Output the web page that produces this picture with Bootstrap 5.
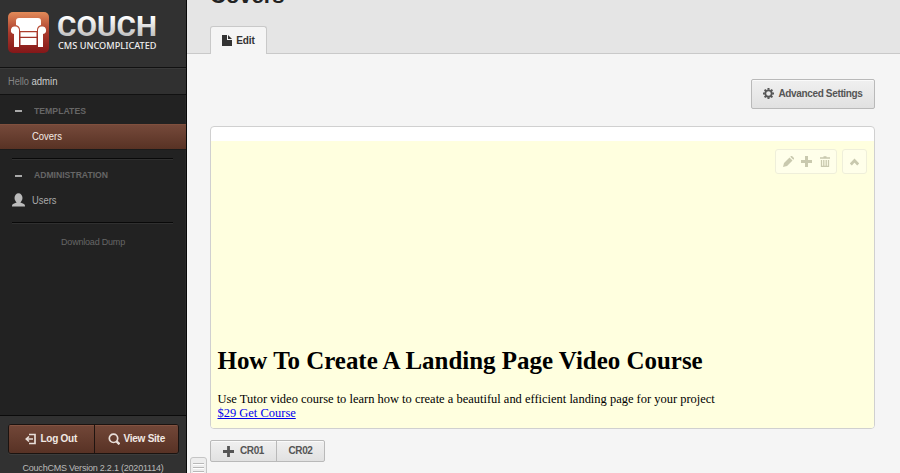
<!DOCTYPE html>
<html lang="en">
<head>
<meta charset="utf-8">
<title>Covers</title>
<link href="https://cdn.jsdelivr.net/npm/bootstrap@5.3.0/dist/css/bootstrap.min.css" rel="stylesheet">
<style>
body{font:12px/18px "Liberation Sans",Arial,sans-serif;background:#f5f5f5;color:#333}
svg{display:block;flex:none}
.app{height:473px}
.side{width:187px;background:#222;border-right:1px solid #080808;box-shadow:inset -1px 0 #292929}
.brand{height:68px;background:#313131;border-bottom:1px solid #111;padding:11px 0 0 7px}
.hello{height:27px;background:#303030;border-top:1px solid #3a3a3a;border-bottom:1px solid #111;padding:3px 8px}
.sect{height:29px;padding:7px 0 0 15px}
.sect i{width:7px;height:2px;background:#aaa;margin:8px 12px 0 0}
.item{height:25px;padding-left:32px;line-height:24px}
.item.on{height:26px;background:linear-gradient(#75493a,#583224);border-top:1px solid #80503e;border-bottom:1px solid #1b1b1b}
.rule{margin:8px 13px 0 12px;height:2px;background:#090909;border-bottom:1px solid #303030}
.dump{font-size:9px;letter-spacing:-.2px;color:#666;text-align:center;margin-top:9px}
.foot{height:58px;background:#313131;border-top:1px solid #0b0b0b;padding:8px 8px 0}
.duo{height:30px;border:1px solid #1b1310;border-radius:3px;overflow:hidden;margin-right:-1px;box-shadow:0 1px #3c3c3c}
.duo a{color:#f2e9e4;font-weight:700;font-size:10px;letter-spacing:-.25px;text-decoration:none;background:linear-gradient(#724738,#583225);box-shadow:inset 0 1px #835341}
.duo a+a{border-left:1px solid #1f1410}
.ver{font-size:9px;letter-spacing:-.22px;line-height:12px;color:#bbb;text-align:center;white-space:nowrap;margin-top:8px}
.top{height:54px;background:#e5e5e5;border-bottom:1px solid #c9c9c9;padding-left:23px}
.top h1{font-size:22px;line-height:24px;font-weight:700;color:#222;margin:-16px 0 18px}
.tab-on{width:57px;height:28px;background:#f5f5f5;border:1px solid #c9c9c9;border-bottom:0;border-radius:3px 3px 0 0;font-weight:700;font-size:10px;letter-spacing:-.15px;color:#333}
.work{padding:25px 25px 0 23px}
.soft{background:linear-gradient(#f0f0f0,#e1e1e1);border:1px solid #b9b9b9;border-radius:2px;color:#555;font-weight:700;font-size:10px;letter-spacing:-.35px;box-shadow:inset 0 1px #fafafa}
.adv{width:124px;height:30px;padding-bottom:1px}
.frame{height:303px;margin-top:17px;border:1px solid #d0d0d0;border-radius:4px;overflow:hidden;background:#fff}
.cover{margin-top:14px;height:287px;background:#ffffdf;font-family:"Liberation Serif","Times New Roman",serif;color:#000;padding:8px 7px 0 6.5px}
.tools{gap:5px}
.tools span{height:25px;border:1px solid #efefda;border-radius:3px;background:#ffffea;color:#c9c9ae}
.tools .edit-set{gap:7.5px;padding:0 6.5px}
.tools .fold{padding:0 7px}
.cover h2{font-size:24.95px;line-height:30px;font-weight:700;margin:172px 0 16px}
.cover p{font-size:12.48px;line-height:14px;margin:0}
.cover a{color:#00e;text-decoration:underline}
.adds{height:22px;margin-top:11px;width:115px}
.adds .first{width:66px;border-right:1px solid #b9b9b9;gap:6px}
.grip{position:absolute;left:190px;top:457px;width:17px;height:20px;border:1px solid #c5c5c5;border-radius:3px;background:#ededed;padding:5px 2px}
.grip i{display:block;height:2px;background:#b8b8b8;border-bottom:1px solid #fff;margin-bottom:2px}
</style>
<script src="https://cdn.jsdelivr.net/npm/bootstrap@5.3.0/dist/js/bootstrap.bundle.min.js"></script>
</head>
<body class="overflow-hidden">
<div class="app d-flex overflow-hidden">
<aside class="side d-flex flex-column flex-shrink-0">
  <div class="brand d-flex">
    <svg width="152" height="44" viewBox="0 0 152 44">
      <defs>
        <linearGradient id="sofa" x2="0" y2="1"><stop offset="0" stop-color="#e28b59"/><stop offset=".5" stop-color="#aa3a2c"/><stop offset="1" stop-color="#841719"/></linearGradient>
        <linearGradient id="steel" x2="0" y2="1"><stop offset=".2" stop-color="#fff"/><stop offset="1" stop-color="#aaa"/></linearGradient>
      </defs>
      <rect x="1" y="1" width="41" height="41" rx="5" fill="url(#sofa)"/>
      <path fill="#fff" d="M9 14V10Q9 7 12 7H31Q34 7 34 10V14Q30 15 30 19V20H13V19Q13 15 9 14ZM8.500 15.500a3.600 3.600 0 0 1 3.500 4V36H7V23a3.700 3.700 0 0 1 1.500-7.500ZM34.500 15.500a3.600 3.600 0 0 0-3.500 4V36h5V23a3.700 3.700 0 0 0-1.500-7.500ZM13.500 21.300H29.500V25.700H13.500ZM13.500 27H29.500V34H13.500Z"/>
      <text x="50" y="25" font-family="Roboto,sans-serif" font-weight="700" font-size="28" textLength="100" lengthAdjust="spacingAndGlyphs" fill="url(#steel)">COUCH</text>
      <text x="51" y="37.500" font-family="Noto Sans,sans-serif" font-weight="500" font-size="9.500" textLength="98.500" lengthAdjust="spacingAndGlyphs" fill="#eee">CMS UNCOMPLICATED</text>
    </svg>
  </div>
  <div class="hello"><svg width="60" height="18"><text y="12.500" font-size="10" textLength="21" lengthAdjust="spacingAndGlyphs" fill="#858585">Hello</text><text x="23.500" y="12.500" font-size="10" textLength="26" lengthAdjust="spacingAndGlyphs" fill="#ccc">admin</text></svg></div>
  <div class="sect d-flex"><i></i><svg width="120" height="18"><text y="12" font-size="9" font-weight="700" textLength="52" lengthAdjust="spacingAndGlyphs" fill="#666">TEMPLATES</text></svg></div>
  <div class="item on"><svg width="60" height="24"><text y="14.800" font-size="10" textLength="30" lengthAdjust="spacingAndGlyphs" fill="#f4ebe5">Covers</text></svg></div>
  <div class="rule"></div>
  <div class="sect d-flex"><i></i><svg width="120" height="18"><text y="11" font-size="9" font-weight="700" textLength="74" lengthAdjust="spacingAndGlyphs" fill="#666">ADMINISTRATION</text></svg></div>
  <div class="item d-flex ps-0"><svg class="mt-1" width="32" height="20" fill="#bbb"><ellipse cx="18.500" cy="5" rx="4" ry="4.700"/><path d="M16.500 7h4v2.500l3.500 1.500q1.200.6 1 2.500H12q-.2-1.900 1-2.500l3.500-1.500Z"/></svg><svg width="60" height="24"><text y="14.500" font-size="10" textLength="24.500" lengthAdjust="spacingAndGlyphs" fill="#aaa">Users</text></svg></div>
  <div class="rule"></div>
  <div class="dump">Download Dump</div>
  <div class="foot mt-auto">
    <div class="duo d-flex">
      <a class="d-flex align-items-center justify-content-center gap-1 w-50" href="#"><svg width="11" height="12" fill="none" stroke="#e8ded9" stroke-width="1.700"><path d="M4 1.500h6v9H4M8 6H1M4 3.500 1.300 6 4 8.500"/></svg>Log Out</a>
      <a class="d-flex align-items-center justify-content-center gap-1 w-50" href="#"><svg width="12" height="12" fill="none" stroke="#e8ded9" stroke-width="1.700"><circle cx="5.500" cy="5.300" r="4.200"/><path d="m8.500 8.300 3 3" stroke-width="2.400"/></svg>View Site</a>
    </div>
    <div class="ver">CouchCMS Version 2.2.1 (20201114)</div>
  </div>
</aside>
<main class="flex-grow-1">
  <header class="top d-flex flex-column">
    <h1>Covers</h1>
    <div class="tab-on flex-shrink-0 d-flex align-items-center justify-content-center gap-1"><svg width="10" height="11" fill="#333"><path d="M0 0h5v5h5v6H0ZM6 0l4 4H6Z"/></svg>Edit</div>
  </header>
  <section class="work">
    <div class="d-flex justify-content-end"><div class="soft adv d-flex align-items-center justify-content-center gap-1"><svg width="11" height="11" viewBox="-6 -6 12 12" fill="none" stroke="#555"><circle r="3.500" stroke-width="2"/><path stroke-width="2.200" d="M0-6v2M0 4v2M-6 0h2M4 0h2M-4.200-4.200l1.400 1.400M2.800 2.800l1.400 1.400M-4.200 4.200l1.400-1.400M2.800-2.800l1.400-1.400"/></svg>Advanced Settings</div></div>
    <div class="frame">
      <div class="cover">
        <div class="tools d-flex justify-content-end">
          <span class="edit-set d-flex align-items-center">
            <svg width="11" height="11" fill="currentColor"><path d="m0 11 1-4 5.500-5.500 3 3L4 10ZM7.300.8 8 0h1l2 2v1l-.7.700Z"/></svg>
            <svg width="11" height="11" fill="none" stroke="currentColor" stroke-width="3"><path d="M5.500 0v11M0 5.500h11"/></svg>
            <svg width="10" height="11" fill="none" stroke="currentColor"><path d="M0 2h10M3.500 1h3" stroke-width="1.500"/><path d="M1.500 4v6.300h7V4M3.800 4v6M6.200 4v6" stroke-width="1.300"/></svg>
          </span>
          <span class="fold d-flex align-items-center"><svg width="9" height="8" fill="none" stroke="currentColor" stroke-width="2.800"><path d="m.8 6.500 3.700-4 3.700 4"/></svg></span>
        </div>
        <h2>How To Create A Landing Page Video Course</h2>
        <p>Use Tutor video course to learn how to create a beautiful and efficient landing page for your project<br><a href="#">$29 Get Course</a></p>
      </div>
    </div>
    <div class="soft adds d-flex">
      <div class="first d-flex align-items-center justify-content-center"><svg width="11" height="11" fill="none" stroke="#555" stroke-width="2.800"><path d="M5.500 0v11M0 5.500h11"/></svg>CR01</div>
      <div class="d-flex align-items-center justify-content-center flex-fill">CR02</div>
    </div>
  </section>
</main>
<div class="grip"><i></i><i></i><i></i></div>
</div>
</body>
</html>
